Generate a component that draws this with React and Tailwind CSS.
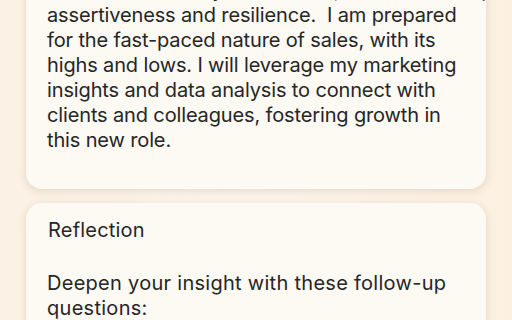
const entryLines = [
  'Moving from marketing into a sales position, I',
  'know it will test my confidence, so I will develop',
  'assertiveness and resilience.\u00a0 I am prepared',
  'for the fast-paced nature of sales, with its',
  'highs and lows. I will leverage my marketing',
  'insights and data analysis to connect with',
  'clients and colleagues, fostering growth in',
  'this new role.',
];

export default function App() {
  return (
    <div
      className="h-screen w-full overflow-hidden bg-gradient-to-r from-[#fbf1e4] via-[#fcf5ec] to-[#fcf0e1] px-[26px] text-[#262626]"
      style={{ fontFamily: 'Inter, "Noto Sans", sans-serif' }}
    >
      <div className="flex flex-col gap-[14px]">
        {/* entry card, scrolled partly out of view */}
        <div className="-mt-[67px] rounded-[16px] bg-[#fdf9f3] px-[21px] pt-[20px] pb-[36px] shadow-[0_2px_8px_rgba(120,90,50,0.18)]">
          <p className="text-[20px] leading-[25px] tracking-[-0.14px] whitespace-nowrap">
            {entryLines.map((line) => (
              <span key={line} className="block">
                {line}
              </span>
            ))}
          </p>
        </div>

        <div className="rounded-[16px] bg-[#fdf9f3] px-[21px] pt-[15px] pb-[20px] shadow-[0_2px_8px_rgba(120,90,50,0.18)]">
          <h2 className="text-[20px] leading-[25px] tracking-[0.2px] pl-[1px]">Reflection</h2>
          <p className="mt-[28px] text-[20px] leading-[25px] tracking-[0.28px]">
            <span className="block">Deepen your insight with these follow-up</span>
            <span className="block">questions:</span>
          </p>
        </div>
      </div>
    </div>
  );
}
